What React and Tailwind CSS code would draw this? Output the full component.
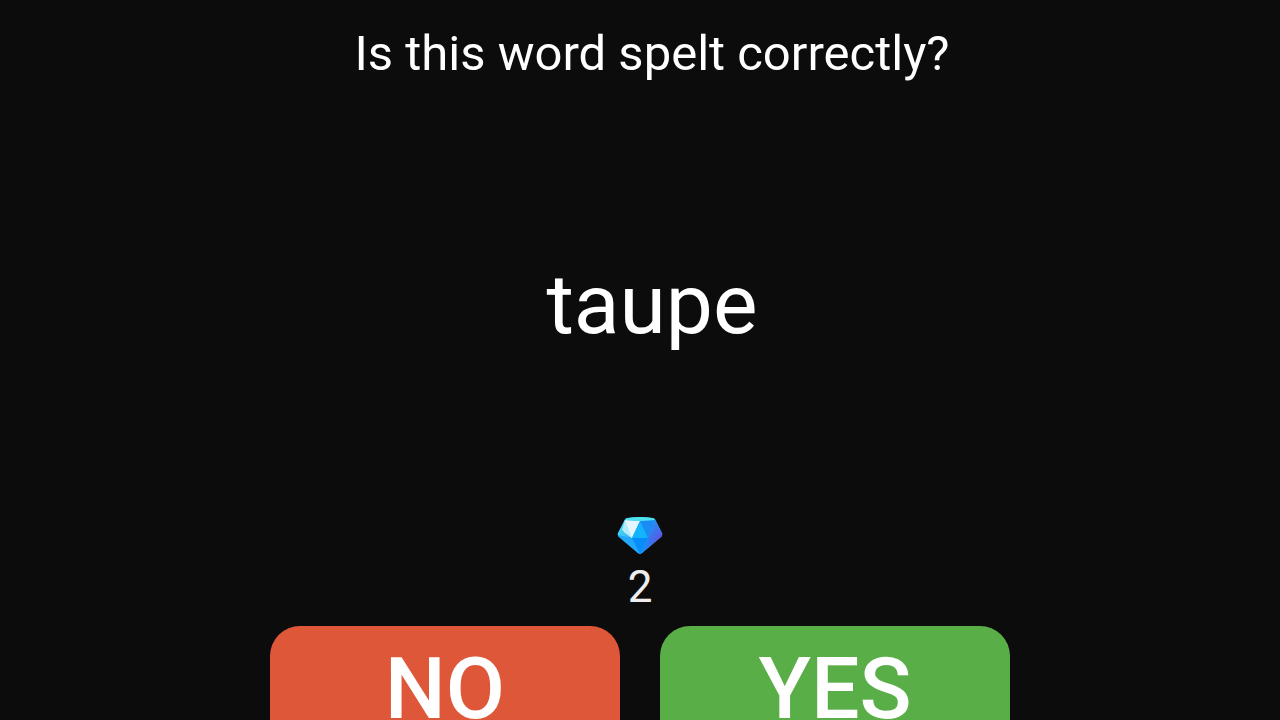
import { useState } from "react"

const answers = [
  { label: "NO", color: "bg-[#de5739]" },
  { label: "YES", color: "bg-[#5aae47]" },
]

function Gem() {
  return (
    <svg viewBox="0 0 46 38" className="w-[46px] h-[38px]" aria-hidden="true">
      <defs>
        <linearGradient id="gem-right" x1="0" y1="0" x2="1" y2="1">
          <stop offset="0" stopColor="#1a9df5" />
          <stop offset="1" stopColor="#5a55e6" />
        </linearGradient>
        <linearGradient id="gem-base" x1="0" y1="0" x2="1" y2="0">
          <stop offset="0" stopColor="#0d96fb" />
          <stop offset="1" stopColor="#6b4fe0" />
        </linearGradient>
        <linearGradient id="gem-left" x1="0" y1="0" x2="1" y2="1">
          <stop offset="0" stopColor="#4fe3ea" />
          <stop offset="1" stopColor="#33b4fb" />
        </linearGradient>
      </defs>
      <path d="M10 1Q23 -1 36 1Q38 1 39 4L45 16Q46 18 44 20L25 36Q23 38 21 36L2 20Q0 18 1 16L7 4Q8 1 10 1Z" fill="#22a9f8" />
      <path d="M8 3L1 16Q0 18 2 20L15 21Z" fill="url(#gem-left)" />
      <path d="M8 3L23 4L15 21L7 15Z" fill="#e4f5fd" />
      <path d="M8 3L5 13L15 21Z" fill="#b4ecfa" />
      <path d="M23 4L15 21L31 21Z" fill="#12b5fb" />
      <path d="M23 4L38 3L31 21Z" fill="#1b8cf5" />
      <path d="M38 3L45 16Q46 18 44 20L31 21Z" fill="url(#gem-right)" />
      <path d="M1 18L15 21L22 37L2 20Z" fill="#22a8fb" />
      <path d="M15 21L31 21L23 37Z" fill="#078cf9" />
      <path d="M31 21L45 18L44 20L25 36L23 37Z" fill="url(#gem-base)" />
      <path d="M8 3Q9 1 11 1Q23 -1 35 1Q37 1 38 3L23 4Z" fill="#4fe4ed" />
    </svg>
  )
}

export default function App() {
  const [gems, setGems] = useState(2)

  return (
    <main className="flex flex-col items-center h-screen overflow-hidden bg-[#0c0c0c] text-white font-['Roboto',sans-serif]">
      <div className="w-full pl-6 pt-6 text-center">
        <h1 className="text-[49px] leading-[60px]">Is this word spelt correctly?</h1>
        <p className="mt-[171px] text-[84px] leading-[100px]">taupe</p>
      </div>

      <div className="mt-[162px] flex flex-col items-center">
        <Gem />
        <output className="mt-2 text-[44px] leading-[48px] text-[#eeeeee]">{gems}</output>
      </div>

      <div className="mt-[15px] grid shrink-0 w-full max-w-[740px] grid-cols-2 gap-10">
        {answers.map((answer) => (
          <button
            key={answer.label}
            type="button"
            onClick={() => setGems(gems + 1)}
            className={`rounded-[30px] py-3 text-[86px] leading-[102px] font-medium ${answer.color}`}
          >
            {answer.label}
          </button>
        ))}
      </div>
    </main>
  )
}
